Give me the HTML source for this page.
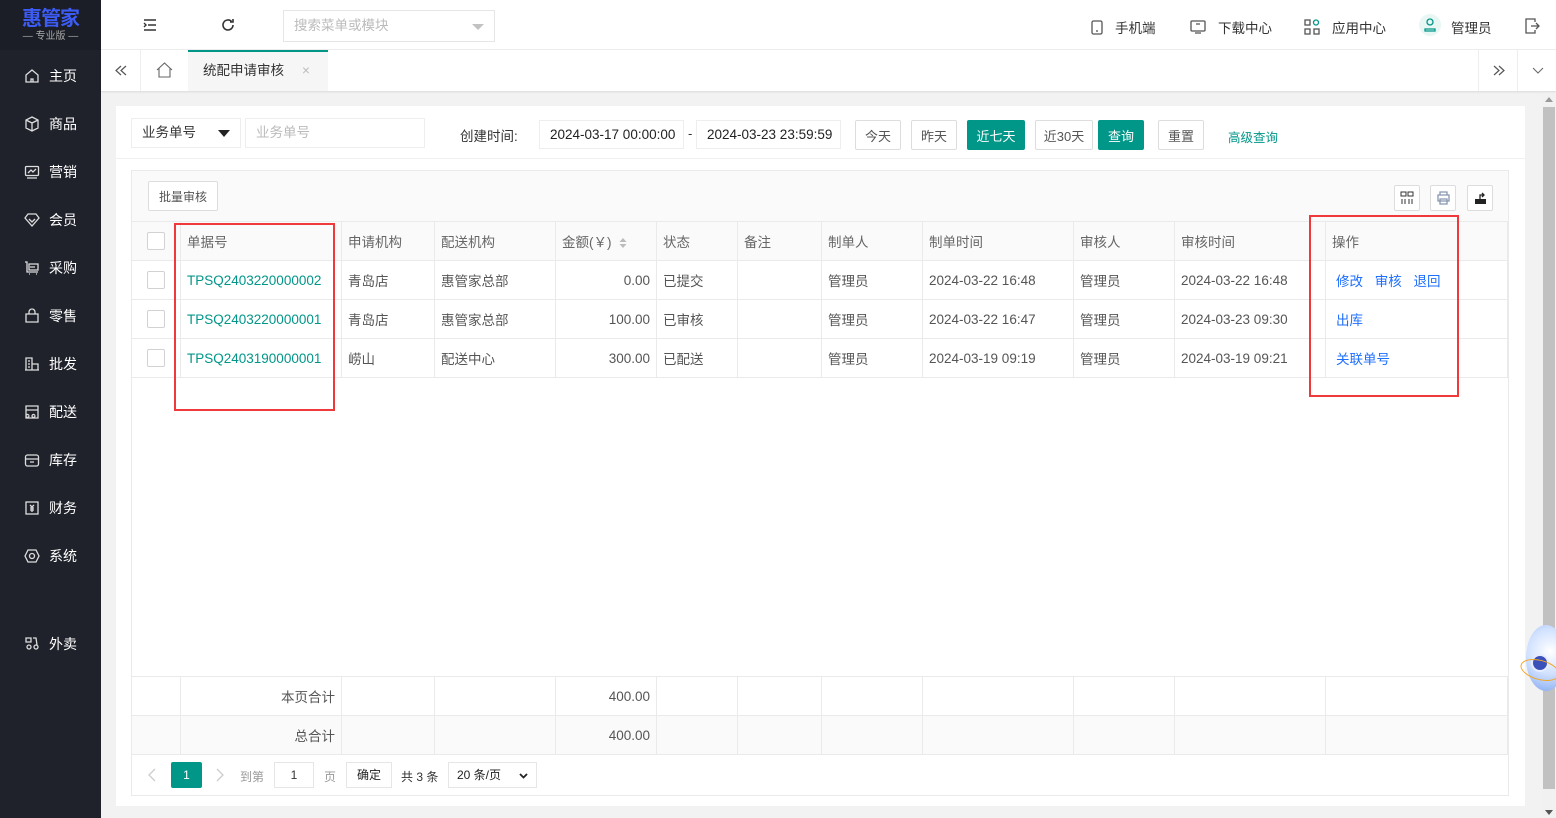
<!DOCTYPE html>
<html><head><meta charset="utf-8">
<style>
*{margin:0;padding:0;box-sizing:border-box}
body{width:1556px;height:818px;overflow:hidden;background:#f2f2f2;font-family:"Liberation Sans","Noto Sans CJK SC",sans-serif;font-size:13px;color:#333;position:relative}
.a{position:absolute}
#side{left:0;top:0;width:101px;height:818px;background:#1f222b}
.si{position:absolute;left:24px;color:#fff;font-size:14px;display:flex;align-items:center;gap:9px}
.si svg{width:16px;height:16px;stroke:#ddd;fill:none;stroke-width:1.3}
#top{left:101px;top:0;right:0;height:50px;background:#fff;border-bottom:1px solid #eee}
#tabs{left:101px;top:50px;right:0;height:41px;background:#fff;box-shadow:0 1px 2px rgba(0,0,0,.1)}
.btn{position:absolute;height:30px;border:1px solid #ddd;background:#fff;color:#555;font-size:13px;display:flex;align-items:center;justify-content:center;border-radius:2px}
.g{background:#009688;border-color:#009688;color:#fff}
table{border-collapse:collapse;position:absolute;left:131px;top:221px;table-layout:fixed}
td{border:1px solid #eaeaea;height:39px;padding:0 6px;white-space:nowrap;font-size:13.5px;color:#555}
.hd td{background:#fafafa;color:#666}
.ln{color:#009688}
.op{color:#1e6fff;margin-right:8px}
.cb{width:18px;height:18px;border:1px solid #d2d2d2;background:#fff;display:inline-block;vertical-align:middle;border-radius:2px}
.r{text-align:right}
</style></head><body>
<div id="side" class="a">
 <div class="a" style="left:0;top:0;width:101px;height:50px;text-align:center;background:#1b1e26">
  <div style="color:#3d5cf5;font-weight:bold;font-size:20px;line-height:22px;margin-top:8px;letter-spacing:-1px">惠管家</div>
  <div style="color:#aaa;font-size:10px;line-height:13px">— 专业版 —</div>
 </div>
 <div class="si" style="top:66px"><svg viewBox="0 0 16 16"><path d="M2 7L8 2l6 5v7H2z M7 14v-3h2v3"/></svg>主页</div>
 <div class="si" style="top:114px"><svg viewBox="0 0 16 16"><path d="M8 1l6 3v8l-6 3-6-3V4z M2 4l6 3 6-3 M8 7v8"/></svg>商品</div>
 <div class="si" style="top:162px"><svg viewBox="0 0 16 16"><rect x="1.5" y="2.5" width="13" height="9" rx="1"/><path d="M4 9l3-3 2 2 3-3 M3 14h10"/></svg>营销</div>
 <div class="si" style="top:210px"><svg viewBox="0 0 16 16"><path d="M4 2h8l3 4-7 8-7-8z M5 7l3 3 3-3"/></svg>会员</div>
 <div class="si" style="top:258px"><svg viewBox="0 0 16 16"><path d="M1 2h2v10h11 M5 4h9v6H5z M6 7h5 M5 14h1 M12 14h1"/></svg>采购</div>
 <div class="si" style="top:306px"><svg viewBox="0 0 16 16"><path d="M2 6h12v8H2z M5 6V4a3 3 0 016 0v2"/></svg>零售</div>
 <div class="si" style="top:354px"><svg viewBox="0 0 16 16"><path d="M2 14V2h6v12 M8 8h6v6 M1 14h14 M4 5h2 M4 8h2 M4 11h2"/></svg>批发</div>
 <div class="si" style="top:402px"><svg viewBox="0 0 16 16"><path d="M2 2h12v4H2z M2 6v8h12V6 M5 12a1.5 1.5 0 110-.1 M11 12a1.5 1.5 0 110-.1"/></svg>配送</div>
 <div class="si" style="top:450px"><svg viewBox="0 0 16 16"><rect x="1.5" y="3" width="13" height="11" rx="2"/><path d="M1.5 7h13 M6 10h4"/></svg>库存</div>
 <div class="si" style="top:498px"><svg viewBox="0 0 16 16"><rect x="2" y="2" width="12" height="12"/><path d="M6 5l2 2 2-2 M8 7v5 M6 8h4 M6 10h4"/></svg>财务</div>
 <div class="si" style="top:546px"><svg viewBox="0 0 16 16"><path d="M4 2h8l3 6-3 6H4L1 8z"/><circle cx="8" cy="8" r="2.5"/></svg>系统</div>
 <div class="si" style="top:634px"><svg viewBox="0 0 16 16"><path d="M2 2h5v4H2z M3 11a2 2 0 104 0 2 2 0 00-4 0 M10 11a2 2 0 104 0 2 2 0 00-4 0 M9 2h3l1 7"/></svg>外卖</div>
</div>

<div id="top" class="a">
 <svg class="a" style="left:42px;top:18px" width="14" height="14" viewBox="0 0 14 14" stroke="#333" stroke-width="1.4" fill="none"><path d="M1 2h12 M5 7h8 M1 12h12 M1 5l2 2-2 2"/></svg>
 <svg class="a" style="left:120px;top:18px" width="14" height="14" viewBox="0 0 14 14" stroke="#333" stroke-width="1.6" fill="none"><path d="M12 7a5 5 0 11-1.5-3.6 M12 1v3h-3"/></svg>
 <div class="a" style="left:182px;top:10px;width:212px;height:32px;border:1px solid #e6e6e6;color:#bbb;font-size:13.5px;line-height:30px;padding-left:10px">搜索菜单或模块<span class="a" style="right:10px;top:13px;border:6px solid transparent;border-top:6px solid #c2c2c2;border-bottom:0"></span></div>
 <div class="a" style="left:990px;top:17px;font-size:13.5px;display:flex;align-items:center;gap:12px"><svg width="12" height="15" viewBox="0 0 12 15" stroke="#555" fill="none" stroke-width="1.3"><rect x="1" y="1" width="10" height="13" rx="1.5"/><path d="M5 11h2"/></svg>手机端</div>
 <div class="a" style="left:1089px;top:17px;font-size:13.5px;display:flex;align-items:center;gap:12px"><svg width="16" height="14" viewBox="0 0 16 14" stroke="#555" fill="none" stroke-width="1.3"><rect x="1" y="1" width="14" height="10" rx="1"/><path d="M5 13h6 M6 4h4"/></svg>下载中心</div>
 <div class="a" style="left:1203px;top:17px;font-size:13.5px;display:flex;align-items:center;gap:12px"><svg width="16" height="16" viewBox="0 0 16 16" stroke="#555" fill="none" stroke-width="1.3"><rect x="1" y="1" width="5" height="5"/><circle cx="12" cy="3.5" r="2.5" stroke="#009688"/><rect x="1" y="10" width="5" height="5"/><rect x="10" y="10" width="5" height="5"/></svg>应用中心</div>
 <div class="a" style="left:1318px;top:14px;width:22px;height:22px;border-radius:50%;background:#e8f6f4"><svg class="a" style="left:5px;top:4px" width="12" height="14" viewBox="0 0 12 14" stroke="#009688" fill="none" stroke-width="1.3"><circle cx="6" cy="4" r="3"/><path d="M1 13v-2h10v2z"/></svg></div>
 <div class="a" style="left:1350px;top:17px;font-size:13.5px">管理员</div>
 <svg class="a" style="left:1424px;top:18px" width="15" height="16" viewBox="0 0 15 16" stroke="#555" fill="none" stroke-width="1.3"><path d="M10 4V1H1v14h9v-3 M6 8h8 M11 5l3 3-3 3"/></svg>
</div>

<div id="tabs" class="a">
 <div class="a" style="left:0;top:0;width:40px;height:41px;border-right:1px solid #eee"><svg class="a" style="left:14px;top:15px" width="12" height="11" viewBox="0 0 12 11" stroke="#555" fill="none" stroke-width="1.2"><path d="M6 1L1 5.5 6 10 M11 1L6 5.5 11 10"/></svg></div>
 <svg class="a" style="left:55px;top:12px" width="17" height="16" viewBox="0 0 17 16" stroke="#666" fill="none" stroke-width="1.1"><path d="M1 8L8.5 1 16 8 M3 6v9h11V6"/></svg>
 <div class="a" style="left:87px;top:0;width:140px;height:41px;background:#f6f6f6;border-top:2px solid #009688;font-size:13.5px;line-height:38px;padding-left:15px;color:#333">统配申请审核<span style="color:#bbb;margin-left:18px">×</span></div>
 <div class="a" style="left:1377px;top:0;width:39px;height:41px;border-left:1px solid #eee"><svg class="a" style="left:14px;top:15px" width="12" height="11" viewBox="0 0 12 11" stroke="#555" fill="none" stroke-width="1.2"><path d="M1 1l5 4.5L1 10 M6 1l5 4.5L6 10"/></svg></div>
 <div class="a" style="left:1416px;top:0;width:39px;height:41px;border-left:1px solid #eee"><svg class="a" style="left:14px;top:17px" width="12" height="7" viewBox="0 0 12 7" stroke="#666" fill="none"><path d="M1 1l5 5 5-5"/></svg></div>
</div>

<div class="a" style="left:1542px;top:93px;width:14px;height:725px;background:#f1f1f1"><div class="a" style="left:1px;top:14px;width:12px;height:682px;background:#c1c1c1"></div><div class="a" style="left:3px;top:4px;border:4px solid transparent;border-bottom:5px solid #999;border-top:0"></div><div class="a" style="left:3px;bottom:3px;border:4px solid transparent;border-top:5px solid #555;border-bottom:0"></div></div>

<div class="a" style="left:116px;top:106px;width:1409px;height:700px;background:#fff">
 <div class="a" style="left:15px;top:12px;width:110px;height:30px;border:1px solid #eee;font-size:13.5px;line-height:28px;padding-left:10px">业务单号<span class="a" style="right:10px;top:11px;border:6px solid transparent;border-top:7px solid #222;border-bottom:0"></span></div>
 <div class="a" style="left:129px;top:12px;width:180px;height:30px;border:1px solid #eee;color:#bbb;font-size:13.5px;line-height:28px;padding-left:10px">业务单号</div>
 <div class="a" style="left:344px;top:19px;font-size:13.5px">创建时间:</div>
 <div class="a" style="left:423px;top:14px;width:145px;height:29px;border:1px solid #eee;font-size:13.5px;line-height:27px;padding-left:10px;color:#222">2024-03-17 00:00:00</div>
 <div class="a" style="left:572px;top:20px">-</div>
 <div class="a" style="left:580px;top:14px;width:145px;height:29px;border:1px solid #eee;font-size:13.5px;line-height:27px;padding-left:10px;color:#222">2024-03-23 23:59:59</div>
 <div class="btn" style="left:739px;top:14px;width:46px">今天</div>
 <div class="btn" style="left:795px;top:14px;width:46px">昨天</div>
 <div class="btn g" style="left:851px;top:14px;width:58px">近七天</div>
 <div class="btn" style="left:919px;top:14px;width:58px">近30天</div>
 <div class="btn g" style="left:982px;top:14px;width:46px">查询</div>
 <div class="btn" style="left:1042px;top:14px;width:46px">重置</div>
 <div class="a" style="left:1112px;top:21px;color:#009688;font-size:12.5px">高级查询</div>
 <div class="a" style="left:0;top:52px;width:1409px;height:1px;background:#f0f0f0"></div>
</div>

<div class="a" style="left:131px;top:170px;width:1378px;height:626px;border:1px solid #eaeaea;background:#fff">
 <div class="a" style="left:0;top:0;width:1376px;height:50px;background:#fafafa"></div>
 <div class="btn" style="left:16px;top:10px;width:70px;height:30px;font-size:12px">批量审核</div>
 <div class="btn" style="left:1262px;top:14px;width:26px;height:26px"><svg width="14" height="14" viewBox="0 0 14 14" stroke="#333" fill="none"><rect x="1" y="1" width="5" height="4"/><rect x="8" y="1" width="5" height="4"/><path d="M2 8v5 M5 8v5 M9 8v5 M12 8v5"/></svg></div>
 <div class="btn" style="left:1298px;top:14px;width:26px;height:26px"><svg width="15" height="14" viewBox="0 0 15 14" stroke="#8796b0" fill="none" stroke-width="1.3"><path d="M4 4V1h7v3 M2 4h11v6H2z M4 8h7v5H4z"/></svg></div>
 <div class="btn" style="left:1335px;top:14px;width:26px;height:26px"><svg width="15" height="14" viewBox="0 0 15 14"><path d="M2 8h11v5H2z" fill="#222"/><path d="M7 8V4h4 M9 2l2 2-2 2" stroke="#222" fill="none" stroke-width="1.3"/></svg></div>
</div>

<table>
<colgroup><col style="width:49px"><col style="width:161px"><col style="width:93px"><col style="width:121px"><col style="width:101px"><col style="width:81px"><col style="width:84px"><col style="width:101px"><col style="width:151px"><col style="width:101px"><col style="width:151px"><col style="width:182px"></colgroup>
<tr class="hd"><td style="text-align:center"><span class="cb"></span></td><td>单据号</td><td>申请机构</td><td>配送机构</td><td>金额(￥) <svg width="8" height="12" viewBox="0 0 8 12" style="vertical-align:middle;margin-left:4px"><path d="M4 1l3.5 4h-7z M4 11L.5 7h7z" fill="#bbb"/></svg></td><td>状态</td><td>备注</td><td>制单人</td><td>制单时间</td><td>审核人</td><td>审核时间</td><td>操作</td></tr>
<tr><td style="text-align:center"><span class="cb"></span></td><td class="ln">TPSQ2403220000002</td><td>青岛店</td><td>惠管家总部</td><td class="r">0.00</td><td>已提交</td><td></td><td>管理员</td><td>2024-03-22 16:48</td><td>管理员</td><td>2024-03-22 16:48</td><td style="padding-left:10px"><span class="op">修改</span> <span class="op">审核</span> <span class="op">退回</span></td></tr>
<tr><td style="text-align:center"><span class="cb"></span></td><td class="ln">TPSQ2403220000001</td><td>青岛店</td><td>惠管家总部</td><td class="r">100.00</td><td>已审核</td><td></td><td>管理员</td><td>2024-03-22 16:47</td><td>管理员</td><td>2024-03-23 09:30</td><td style="padding-left:10px"><span class="op">出库</span></td></tr>
<tr><td style="text-align:center"><span class="cb"></span></td><td class="ln">TPSQ2403190000001</td><td>崂山</td><td>配送中心</td><td class="r">300.00</td><td>已配送</td><td></td><td>管理员</td><td>2024-03-19 09:19</td><td>管理员</td><td>2024-03-19 09:21</td><td style="padding-left:10px"><span class="op">关联单号</span></td></tr>
<tr><td colspan="12" style="height:299px;border-left:0;border-right:0"></td></tr>
<tr><td></td><td class="r">本页合计</td><td></td><td></td><td class="r">400.00</td><td></td><td></td><td></td><td></td><td></td><td></td><td></td></tr>
<tr style="background:#fafafa"><td></td><td class="r">总合计</td><td></td><td></td><td class="r">400.00</td><td></td><td></td><td></td><td></td><td></td><td></td><td></td></tr>
</table>

<svg class="a" style="left:148px;top:768px" width="8" height="14" viewBox="0 0 8 14" stroke="#ccc" fill="none" stroke-width="1.3"><path d="M7 1L1 7l6 6"/></svg>
<div class="a" style="left:171px;top:762px;width:31px;height:26px;background:#009688;color:#fff;text-align:center;line-height:26px;border-radius:2px;font-size:12px">1</div>
<svg class="a" style="left:216px;top:768px" width="8" height="14" viewBox="0 0 8 14" stroke="#ccc" fill="none" stroke-width="1.3"><path d="M1 1l6 6-6 6"/></svg>
<div class="a" style="left:240px;top:768px;color:#999;font-size:12px">到第</div>
<div class="a" style="left:274px;top:762px;width:40px;height:26px;border:1px solid #e6e6e6;text-align:center;line-height:24px;font-size:12px">1</div>
<div class="a" style="left:324px;top:768px;color:#999;font-size:12px">页</div>
<div class="a" style="left:346px;top:762px;width:46px;height:26px;border:1px solid #e6e6e6;text-align:center;line-height:25px;font-size:12px;color:#222">确定</div>
<div class="a" style="left:401px;top:768px;font-size:12px">共 3 条</div>
<div class="a" style="left:448px;top:762px;width:89px;height:26px;border:1px solid #e6e6e6;line-height:24px;font-size:12px;padding-left:8px;color:#222">20 条/页<svg class="a" style="right:8px;top:10px" width="9" height="6" viewBox="0 0 9 6" stroke="#222" fill="none" stroke-width="1.8"><path d="M1 1l3.5 3.5L8 1"/></svg></div>

<div class="a" style="left:174px;top:223px;width:161px;height:188px;border:2px solid #f0393a"></div>
<div class="a" style="left:1309px;top:215px;width:150px;height:182px;border:2px solid #f0393a"></div>

<div class="a" style="left:1526px;top:625px;width:40px;height:66px;border-radius:50%;background:radial-gradient(circle at 60% 40%,#fff,#cfe0ff 50%,#7fa6ee);"></div>
<div class="a" style="left:1531px;top:654px;width:18px;height:18px;border-radius:50%;background:#3b50b8;border:2px solid #e7ecff"></div>
<div class="a" style="left:1520px;top:660px;width:40px;height:20px;border-radius:50%;border:1px solid #f5a623;transform:rotate(15deg)"></div>
</body></html>
